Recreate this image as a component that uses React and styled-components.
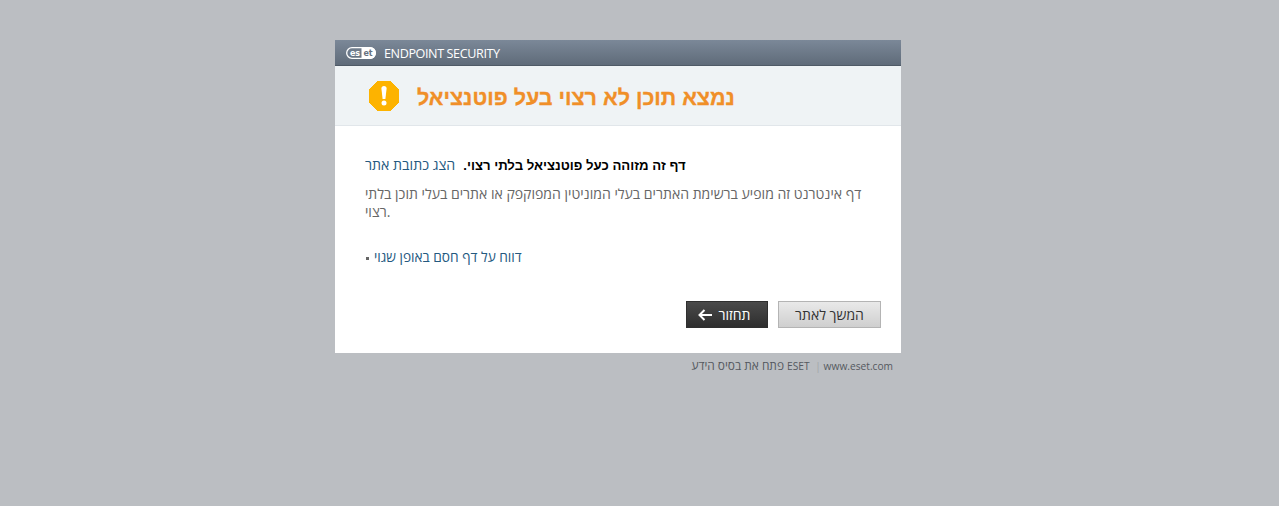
import styled, { createGlobalStyle } from 'styled-components';

const GlobalStyle = createGlobalStyle`
  html, body {
    margin: 0;
    padding: 0;
    height: 100%;
    background: #bbbec2;
    font-family: "Open Sans", "Liberation Sans", sans-serif;
  }
`;

const Page = styled.div`
  width: 566px;
  margin-left: 335px;
  padding-top: 40px;
`;

const Card = styled.div`
  background: #fff;
  height: 313px;
  display: flex;
  flex-direction: column;
`;

const TopBar = styled.div`
  height: 26px;
  box-sizing: border-box;
  display: flex;
  align-items: center;
  gap: 8px;
  padding: 1px 0 0 11px;
  background: linear-gradient(#7b8898, #5f6b79);
  border-bottom: 1px solid #4f5a66;
`;

const Product = styled.span`
  color: #fff;
  font-size: 12.6px;
  letter-spacing: -0.4px;
`;

const TitleBand = styled.div`
  height: 60px;
  box-sizing: border-box;
  display: flex;
  align-items: center;
  gap: 18px;
  padding-left: 34px;
  background: #eff3f5;
  border-bottom: 1px solid #e1e6ea;
`;

const Title = styled.h1`
  margin: 6px 0 0;
  font-family: "Liberation Sans", sans-serif;
  font-size: 21.5px;
  font-weight: 700;
  color: #f08f28;
  -webkit-text-stroke: 0.3px #f08f28;
`;

const Body = styled.div`
  flex: 1;
  padding: 29px 20px 25px 30px;
  display: flex;
  flex-direction: column;
`;

const Lead = styled.p`
  margin: 0;
  font-size: 14.2px;
  line-height: 20px;
  color: #000;
`;

const Strong = styled.strong`
  font-family: "Liberation Sans", sans-serif;
  font-size: 13.2px;
  font-weight: 700;
  margin-left: 8px;
`;

const Link = styled.a`
  color: #24597f;
  text-decoration: none;
`;

const Description = styled.p`
  margin: 9px 0 0;
  width: 500px;
  font-size: 14.05px;
  line-height: 18px;
  color: #666;
`;

const Report = styled.p`
  margin: 26px 0 0;
  font-size: 13.7px;
  line-height: 20px;
  color: #555;
  display: flex;
  align-items: center;
  gap: 5px;
`;

const Bullet = styled.i`
  width: 3px;
  height: 3px;
  margin: 2px 0 0 1px;
  background: #666;
`;

const Actions = styled.div`
  margin-top: auto;
  display: flex;
  justify-content: flex-end;
  gap: 10px;
`;

const Button = styled.button`
  height: 27px;
  padding: 0 ${(p) => (p.$dark ? '6px' : '0')} 0 0;
  width: ${(p) => (p.$dark ? '82px' : '103px')};
  box-sizing: border-box;
  display: flex;
  align-items: center;
  justify-content: center;
  gap: 7px;
  font-family: "Open Sans", "Liberation Sans", sans-serif;
  font-size: 14px;
  color: ${(p) => (p.$dark ? '#fff' : '#333')};
  border: 1px solid ${(p) => (p.$dark ? '#2f2f2f' : '#b4b4b4')};
  background: ${(p) =>
    p.$dark
      ? 'linear-gradient(#4a4a4a, #2e2e2e)'
      : 'linear-gradient(#e9e9e9, #cfcfcf)'};
`;

const Footer = styled.div`
  display: flex;
  justify-content: flex-end;
  align-items: baseline;
  gap: 5.5px;
  padding: 5px 8px 0 0;
  font-size: 11.9px;
  line-height: 14px;
  color: #55595f;
`;

const Sep = styled.span`
  width: 3px;
  text-align: center;
  color: #a3a7ab;
  font-size: 11px;
`;

const Latin = styled.span`
  font-size: 10.2px;
`;

const Logo = () => (
  <svg width="30" height="12" viewBox="0 0 30 12">
    <rect x="0.7" y="0.7" width="28.6" height="10.6" rx="5.3" fill="none" stroke="#fff" strokeWidth="1.3" />
    <path d="M15.5 0H24a6 6 0 0 1 0 12h-8.500z" fill="#fff" />
    <text x="9" y="8.800" fontSize="8" fontWeight="700" fill="#fff" textAnchor="middle" fontFamily="DejaVu Sans">es</text>
    <text x="22" y="8.800" fontSize="8" fontWeight="700" fill="#66727f" textAnchor="middle" fontFamily="DejaVu Sans">et</text>
  </svg>
);

const WarningIcon = () => (
  <svg width="30" height="30" viewBox="0 0 30 30">
    <path d="M9 0h12l9 9v12l-9 9H9l-9-9V9z" fill="#fdb300" stroke="#fdb300" strokeLinejoin="round" />
    <path d="M12.4 7.500a2.600 2.600 0 0 1 5.200 0L16.400 18h-2.800z" fill="#fff" />
    <circle cx="15" cy="22" r="2.500" fill="#fff" />
  </svg>
);

const ArrowIcon = () => (
  <svg width="14" height="12" viewBox="0 0 14 12">
    <path d="M14 6H2M6.500 1 1.500 6l5 5" fill="none" stroke="#fff" strokeWidth="2" />
  </svg>
);

export default function App() {
  return (
    <>
      <GlobalStyle />
      <Page>
        <Card>
          <TopBar>
            <Logo />
            <Product>ENDPOINT SECURITY</Product>
          </TopBar>
          <TitleBand>
            <WarningIcon />
            <Title>נמצא תוכן לא רצוי בעל פוטנציאל</Title>
          </TitleBand>
          <Body>
            <Lead>
              <Strong>דף זה מזוהה כעל פוטנציאל בלתי רצוי.</Strong>
              <Link href="#">הצג כתובת אתר</Link>
            </Lead>
            <Description>
              דף אינטרנט זה מופיע ברשימת האתרים בעלי המוניטין המפוקפק או אתרים בעלי תוכן בלתי רצוי.
            </Description>
            <Report>
              <Bullet />
              <Link href="#">דווח על דף חסם באופן שגוי</Link>
            </Report>
            <Actions>
              <Button $dark>
                <ArrowIcon />
                תחזור
              </Button>
              <Button>המשך לאתר</Button>
            </Actions>
          </Body>
        </Card>
        <Footer>
          <span>
            פתח את בסיס הידע <Latin>ESET</Latin>
          </span>
          <Sep>|</Sep>
          <Latin>www.eset.com</Latin>
        </Footer>
      </Page>
    </>
  );
}
